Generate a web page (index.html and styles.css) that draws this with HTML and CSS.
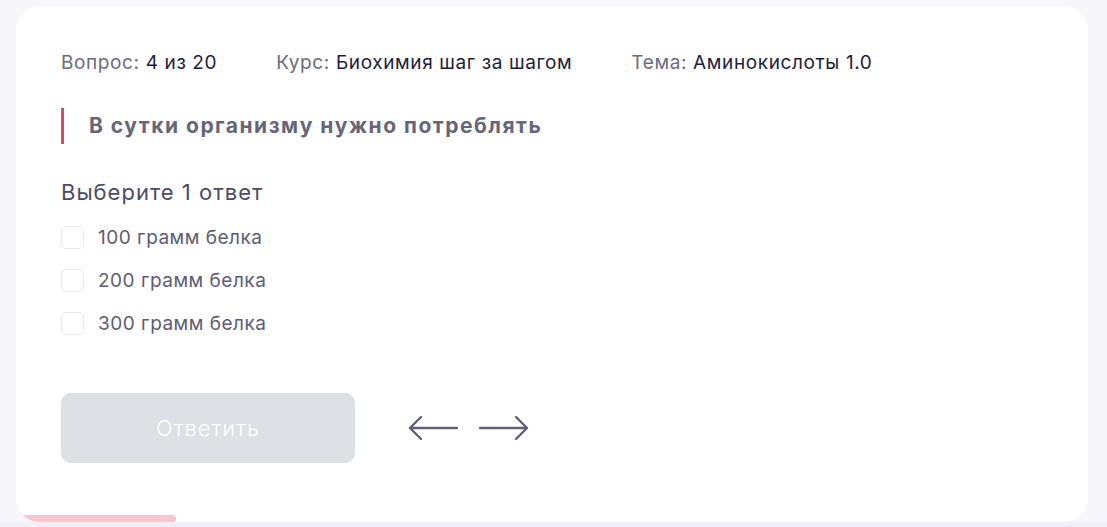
FILE: index.html
```html
<!DOCTYPE html>
<html lang="ru">
<head>
<meta charset="utf-8">
<link rel="stylesheet" href="styles.css">
</head>
<body>
<div class="page">
  <div class="card">
    <div class="meta">
      <div class="meta-item"><span class="label">Вопрос:</span> <span class="value">4 из 20</span></div>
      <div class="meta-item"><span class="label">Курс:</span> <span class="value">Биохимия шаг за шагом</span></div>
      <div class="meta-item"><span class="label">Тема:</span> <span class="value">Аминокислоты 1.0</span></div>
    </div>
    <div class="question">В сутки организму нужно потреблять</div>
    <div class="hint">Выберите 1 ответ</div>
    <div class="options">
      <label class="option"><span class="box"></span><span class="opt-text">100 грамм белка</span></label>
      <label class="option"><span class="box"></span><span class="opt-text">200 грамм белка</span></label>
      <label class="option"><span class="box"></span><span class="opt-text">300 грамм белка</span></label>
    </div>
    <div class="actions">
      <button class="submit">Ответить</button>
      <div class="nav">
        <svg class="arrow" width="50" height="26" viewBox="0 0 50 26"><path d="M49 13H2M13 2L2 13L13 24" fill="none" stroke="#5f6079" stroke-width="2.4" stroke-linecap="round" stroke-linejoin="round"/></svg>
        <svg class="arrow" width="50" height="26" viewBox="0 0 50 26"><path d="M1 13H48M37 2L48 13L37 24" fill="none" stroke="#5f6079" stroke-width="2.4" stroke-linecap="round" stroke-linejoin="round"/></svg>
      </div>
    </div>
    <div class="progress"><div class="progress-fill" style="width:160px"></div></div>
  </div>
</div>
</body>
</html>
```
FILE: styles.css
```css
* { box-sizing: border-box; }
html, body { margin: 0; padding: 0; }
body {
  background: #f7f7fb;
  font-family: "Inter", "Noto Sans", sans-serif;
  width: 1107px;
  height: 527px;
  overflow: hidden;
}
.page {
  padding: 6px 19px 0 16px;
  height: 527px;
  background: linear-gradient(to bottom, #f7f7fb 0, #f7f7fb 520px, #f1f0f8 522px);
}
.card {
  position: relative;
  background: #fff;
  border-radius: 24px;
  height: 516px;
  padding: 40px 45px 0 45px;
  overflow: hidden;
}
.meta {
  display: flex;
  gap: 59px;
  font-size: 19px;
  line-height: 34px;
  letter-spacing: 0.62px;
}
.label { color: #6b6b7d; }
.value { color: #1d1d3b; }
.question {
  margin-top: 28px;
  border-left: 3px solid #dc4466;
  padding-left: 25px;
  font-size: 21px;
  font-weight: 700;
  color: #66667a;
  line-height: 36px;
  letter-spacing: 1.5px;
}
.hint {
  margin-top: 33px;
  font-size: 22px;
  color: #4b4b65;
  line-height: 30px;
  letter-spacing: 1px;
}
.options {
  display: flex;
  flex-direction: column;
  gap: 20px;
  margin-top: 19px;
}
.option {
  display: flex;
  align-items: center;
  height: 23px;
  gap: 14px;
}
.box {
  width: 23px;
  height: 23px;
  border: 1.5px solid #e9e9ee;
  border-radius: 5px;
  flex: none;
}
.opt-text {
  font-size: 19px;
  color: #5d5d72;
  letter-spacing: 0.5px;
}
.actions {
  display: flex;
  align-items: center;
  margin-top: 58px;
  gap: 53px;
}
.submit {
  width: 294px;
  height: 70px;
  border: none;
  border-radius: 10px;
  background: #dde0e5;
  color: #fff;
  font-family: "Inter", "Noto Sans", sans-serif;
  font-size: 22px;
  font-weight: 300;
  letter-spacing: 0.9px;
}
.nav {
  display: flex;
  gap: 21px;
  align-items: center;
}
.arrow { display: block; }
.progress {
  position: absolute;
  left: 0;
  right: 0;
  bottom: 0;
  height: 7px;
}
.progress-fill {
  height: 7px;
  background: #f6c5cd;
  border-radius: 0 4px 4px 0;
}
```
